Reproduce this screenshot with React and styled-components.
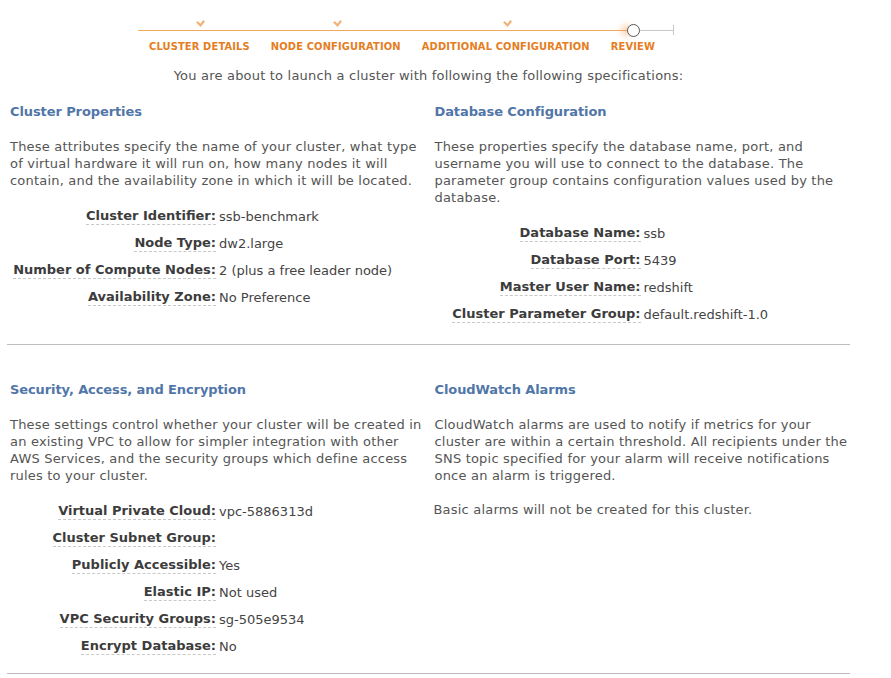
import React from "react";
import styled, { createGlobalStyle } from "styled-components";

const GlobalStyle = createGlobalStyle`
  body {
    margin: 0;
    background: #ffffff;
    font-family: "DejaVu Sans", Verdana, sans-serif;
    font-size: 13px;
    letter-spacing: 0.2px;
    color: #555555;
  }
`;

const Page = styled.div`
  width: 843px;
  margin-left: 7px;
  padding-top: 14px;
`;

const StepBar = styled.div`
  position: relative;
  display: flex;
  gap: 21px;
  margin-left: 131px;
  width: 536px;
  padding-left: 11px;
  box-sizing: border-box;

  /* progress line behind the steps */
  &::before {
    content: "";
    position: absolute;
    left: 0;
    top: 16px;
    width: 490px;
    height: 1px;
    background: #f0a860;
  }
  &::after {
    content: "";
    position: absolute;
    left: 502px;
    top: 11px;
    width: 33px;
    height: 10px;
    background: linear-gradient(#c8c8c8, #c8c8c8) left center / 100% 1px no-repeat;
    border-right: 1px solid #c8c8c8;
  }
`;

const Step = styled.div`
  position: relative;
  display: flex;
  flex-direction: column;
  align-items: center;
`;

const Marker = styled.div`
  height: 26px;
  display: flex;
  justify-content: center;
  align-items: flex-start;
  padding-top: ${(p) => (p.current ? "10px" : "6px")};
  padding-left: ${(p) => (p.current ? "1px" : "3px")};
  box-sizing: border-box;
`;

const Ring = styled.div`
  width: 11px;
  height: 11px;
  border: 1.5px solid #555555;
  border-radius: 50%;
  background: #ffffff;
  box-shadow: -7px 0 7px -2px rgba(240, 150, 70, 0.6);
`;

const StepLabel = styled.div`
  font-family: "DejaVu Sans Condensed", "DejaVu Sans", sans-serif;
  font-stretch: condensed;
  font-size: 11px;
  font-weight: bold;
  letter-spacing: 0.15px;
  color: #e57e1e;
  text-transform: uppercase;
  line-height: 14px;
  white-space: nowrap;
`;

const Intro = styled.p`
  margin: 13px 0 0;
  text-align: center;
  line-height: 17px;
`;

const Section = styled.div`
  display: grid;
  grid-template-columns: 1fr 1fr;
  column-gap: 6px;
  padding: ${(p) => p.pad};
  border-bottom: 1px solid #bdbdbd;
`;

const Column = styled.div`
  padding-left: 3px;
`;

const Heading = styled.h3`
  margin: 0;
  font-size: 13px;
  font-weight: bold;
  letter-spacing: -0.1px;
  color: #5176a8;
  line-height: 17px;
`;

const Para = styled.p`
  margin: ${(p) => p.margin || "18px 0 0"};
  line-height: 17px;
`;

const Props = styled.div`
  display: flex;
  flex-direction: column;
  gap: 10px;
  margin-top: 19px;
`;

const Row = styled.div`
  display: grid;
  grid-template-columns: ${(p) => p.labelWidth}px 1fr;
  column-gap: 3px;
  line-height: 17px;
`;

const Label = styled.div`
  justify-self: end;
  font-weight: bold;
  letter-spacing: 0;
  color: #3c3c3c;
  border-bottom: 1px dashed #c8c8c8;
  line-height: 16px;
`;

const Value = styled.div`
  color: #444444;
  letter-spacing: 0;
`;

const Check = () => (
  <svg width="9" height="7" viewBox="0 0 9 7">
    <path d="M0 2.2 L2 1.2 L4.5 3.8 L7.2 0 L9 1.4 L4.5 7 Z" fill="#f2b077" />
  </svg>
);

const steps = [
  "Cluster Details",
  "Node Configuration",
  "Additional Configuration",
  "Review",
];

const PropList = ({ items, labelWidth }) => (
  <Props>
    {items.map(([k, v]) => (
      <Row key={k} labelWidth={labelWidth}>
        <Label>{k}:</Label>
        <Value>{v}</Value>
      </Row>
    ))}
  </Props>
);

export default function App() {
  return (
    <Page>
      <GlobalStyle />
      <StepBar>
        {steps.map((s, i) => {
          const current = i === steps.length - 1;
          return (
            <Step key={s}>
              <Marker current={current}>{current ? <Ring /> : <Check />}</Marker>
              <StepLabel>{s}</StepLabel>
            </Step>
          );
        })}
      </StepBar>
      <Intro>
        You are about to launch a cluster with following the following
        specifications:
      </Intro>

      <Section pad="19px 0 21px">
        <Column>
          <Heading>Cluster Properties</Heading>
          <Para>
            These attributes specify the name of your cluster, what type of
            virtual hardware it will run on, how many nodes it will contain, and
            the availability zone in which it will be located.
          </Para>
          <PropList
            labelWidth={206}
            items={[
              ["Cluster Identifier", "ssb-benchmark"],
              ["Node Type", "dw2.large"],
              ["Number of Compute Nodes", "2 (plus a free leader node)"],
              ["Availability Zone", "No Preference"],
            ]}
          />
        </Column>
        <Column>
          <Heading>Database Configuration</Heading>
          <Para>
            These properties specify the database name, port, and username you
            will use to connect to the database. The parameter group contains
            configuration values used by the database.
          </Para>
          <PropList
            labelWidth={206}
            items={[
              ["Database Name", "ssb"],
              ["Database Port", "5439"],
              ["Master User Name", "redshift"],
              ["Cluster Parameter Group", "default.redshift-1.0"],
            ]}
          />
        </Column>
      </Section>

      <Section pad="36px 0 18px">
        <Column>
          <Heading>Security, Access, and Encryption</Heading>
          <Para>
            These settings control whether your cluster will be created in an
            existing VPC to allow for simpler integration with other AWS
            Services, and the security groups which define access rules to your
            cluster.
          </Para>
          <PropList
            labelWidth={206}
            items={[
              ["Virtual Private Cloud", "vpc-5886313d"],
              ["Cluster Subnet Group", ""],
              ["Publicly Accessible", "Yes"],
              ["Elastic IP", "Not used"],
              ["VPC Security Groups", "sg-505e9534"],
              ["Encrypt Database", "No"],
            ]}
          />
        </Column>
        <Column>
          <Heading>CloudWatch Alarms</Heading>
          <Para>
            CloudWatch alarms are used to notify if metrics for your cluster are
            within a certain threshold. All recipients under the SNS topic
            specified for your alarm will receive notifications once an alarm is
            triggered.
          </Para>
          <Para margin="17px 0 0 -1px">
            Basic alarms will not be created for this cluster.
          </Para>
        </Column>
      </Section>
    </Page>
  );
}
